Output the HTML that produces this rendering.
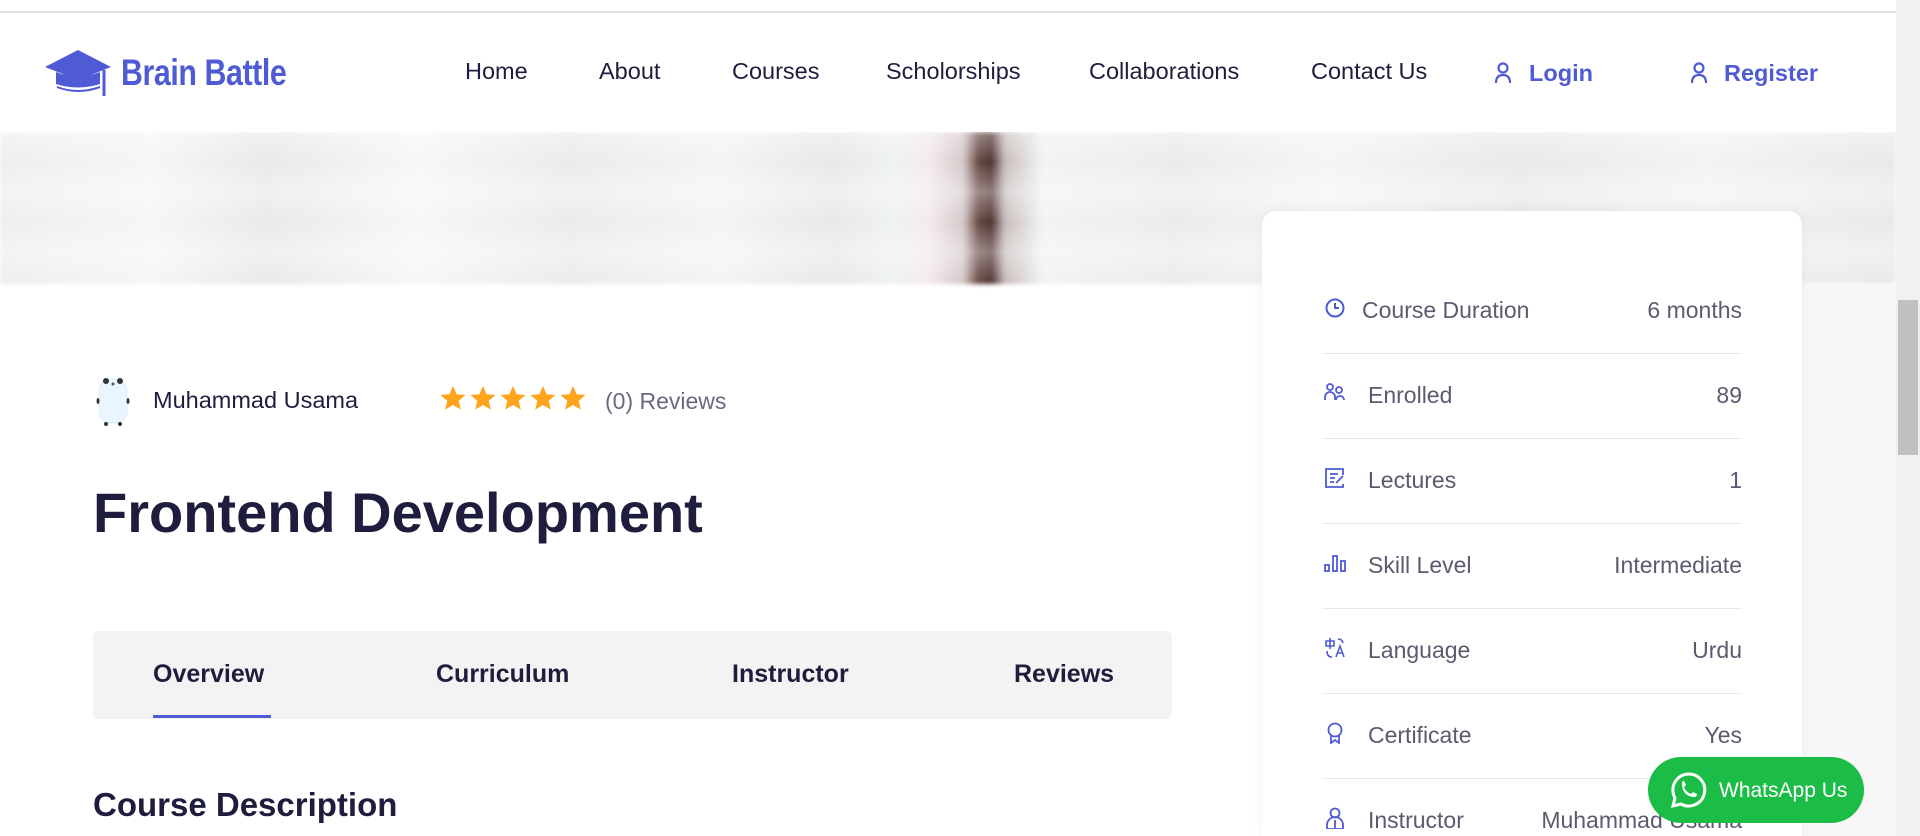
<!DOCTYPE html>
<html><head><meta charset="utf-8"><style>
*{margin:0;padding:0;box-sizing:border-box}
html,body{width:1920px;height:836px;overflow:hidden}
body{background:#fff;font-family:"Liberation Sans",sans-serif;position:relative;color:#1f1d3d}
.abs{position:absolute}
.topline{left:0;top:0;width:1920px;height:13px;background:#fff;border-bottom:2px solid #e2e2e2}
.header{left:0;top:13px;width:1896px;height:119px;background:#fff;z-index:3}
.nav{font-size:23.5px;color:#1f1d3d;top:58px;z-index:4}
.blue{color:#4f5bd5}
.hero{left:0;top:132px;width:1896px;height:152px;background:linear-gradient(90deg,#eee 0,#f6f6f6 8%,#e9e9e9 14%,#f7f7f7 22%,#ebebeb 30%,#f4f4f4 38%,#e8e8e8 44%,#eef2f0 47%,#f3eaee 49%,#d5c9c9 50.8%,#6a4a44 51.6%,#4e3632 52.3%,#c9bcbc 53%,#f1f4f2 55%,#ebebeb 62%,#f5f5f5 70%,#e9e9e9 80%,#f3f3f3 90%,#e9e9e9 100%);filter:blur(2px)}
.hero2{left:0;top:132px;width:1896px;height:152px;background:repeating-linear-gradient(180deg,rgba(255,255,255,.35) 0,rgba(255,255,255,0) 30px,rgba(255,255,255,.35) 60px)}
.side{left:1801px;top:284px;width:95px;height:552px;background:#f7f7f7}
.scroll{left:1896px;top:0;width:24px;height:836px;background:#f1f1f1}
.thumb{left:1898px;top:300px;width:20px;height:155px;background:#c1c1c1}
.card{left:1262px;top:211px;width:540px;height:625px;background:#fff;border-radius:14px 14px 0 0;box-shadow:0 0 14px rgba(0,0,0,.05)}
.row{left:1322px;width:420px;height:57px;border-bottom:1px solid #e8e8ee;font-size:23px;color:#5c5a6e}
.row .ic{position:absolute;left:2px;top:0;width:22px;height:22px}
.row .lb{position:absolute;left:46px;top:0}
.row .vl{position:absolute;right:0;top:0}
.tabs{left:93px;top:631px;width:1079px;height:88px;background:#f3f3f3;border-radius:6px}
.tab{font-size:25px;font-weight:bold;top:660px;color:#1f1d3d}
.wa{left:1648px;top:757px;width:216px;height:66px;background:#1bbd47;border-radius:33px;color:#fff;font-size:21px;z-index:5}
</style></head><body>
<div class="abs topline"></div>
<div class="abs header"></div>
<svg class="abs" style="left:44px;top:50px;z-index:4" width="76" height="52" viewBox="0 0 76 52"><path d="M34 0 L67 17 L34 30 L1 17Z" fill="#4f5bd5"/><path d="M12 22 Q34 31 56 22 L56 34 Q34 41 12 34Z" fill="#4f5bd5"/><path d="M13 37 Q34 45 56 37" stroke="#4f5bd5" stroke-width="2" fill="none"/><path d="M60 20 L60 46" stroke="#4f5bd5" stroke-width="3"/></svg>
<div class="abs blue" style="left:121px;top:52px;font-size:37px;z-index:4;transform:scaleX(.82);transform-origin:left;font-weight:bold;letter-spacing:-0.5px">Brain Battle</div>
<div class="abs nav" style="left:465px">Home</div>
<div class="abs nav" style="left:599px">About</div>
<div class="abs nav" style="left:732px">Courses</div>
<div class="abs nav" style="left:886px">Scholorships</div>
<div class="abs nav" style="left:1089px">Collaborations</div>
<div class="abs nav" style="left:1311px">Contact Us</div>
<svg class="abs" style="left:1494px;top:62px;z-index:4" width="18" height="22" viewBox="0 0 18 22" fill="none" stroke="#4f5bd5" stroke-width="2.2"><circle cx="9" cy="6" r="4.5"/><path d="M2 21 Q2 13 9 13 Q16 13 16 21"/></svg>
<div class="abs nav blue" style="left:1529px;top:60px;font-weight:bold">Login</div>
<svg class="abs" style="left:1690px;top:62px;z-index:4" width="18" height="22" viewBox="0 0 18 22" fill="none" stroke="#4f5bd5" stroke-width="2.2"><circle cx="9" cy="6" r="4.5"/><path d="M2 21 Q2 13 9 13 Q16 13 16 21"/></svg>
<div class="abs nav blue" style="left:1724px;top:60px;font-weight:bold">Register</div>
<div class="abs hero"></div><div class="abs hero2"></div>
<div class="abs side"></div>
<div class="abs scroll"></div><div class="abs thumb"></div>
<div class="abs card"></div>

<div class="abs row" style="top:297px"><svg class="ic" viewBox="0 0 22 22" fill="none" stroke="#4f5bd5" stroke-width="2"><circle cx="11" cy="11" r="8.5"/><path d="M11 6v5h4"/></svg><span class="lb" style="left:40px">Course Duration</span><span class="vl">6 months</span></div>
<div class="abs row" style="top:382px"><svg class="ic" viewBox="0 0 22 22" fill="none" stroke="#4f5bd5" stroke-width="1.8"><circle cx="6" cy="5" r="3"/><path d="M1 18v-3a5 5 0 0110 0v3"/><circle cx="15" cy="8" r="3"/><path d="M12 18a4 4 0 018 0"/></svg><span class="lb">Enrolled</span><span class="vl">89</span></div>
<div class="abs row" style="top:467px"><svg class="ic" viewBox="0 0 22 22" fill="none" stroke="#4f5bd5" stroke-width="1.8"><path d="M19 8V2H2v18h17v-3"/><path d="M6 7h8M6 11h5M6 15h4M12 16l7-7"/></svg><span class="lb">Lectures</span><span class="vl">1</span></div>
<div class="abs row" style="top:552px"><svg class="ic" viewBox="0 0 22 22" fill="none" stroke="#4f5bd5" stroke-width="1.8"><rect x="1" y="13" width="4" height="6"/><rect x="9" y="4" width="4" height="15"/><rect x="17" y="9" width="4" height="10"/></svg><span class="lb">Skill Level</span><span class="vl">Intermediate</span></div>
<div class="abs row" style="top:637px"><svg class="ic" viewBox="0 0 22 22" fill="none" stroke="#4f5bd5" stroke-width="1.6"><path d="M2 4h8v5H2zM6 1v11M3 14q0 6 5 6M12 20l4-11 4 11M13.5 16h5M14 2q4 0 5 4"/></svg><span class="lb">Language</span><span class="vl">Urdu</span></div>
<div class="abs row" style="top:722px"><svg class="ic" viewBox="0 0 22 22" fill="none" stroke="#4f5bd5" stroke-width="1.8"><circle cx="11" cy="8" r="6.5"/><path d="M7 13v8l4-3 4 3v-8"/></svg><span class="lb">Certificate</span><span class="vl">Yes</span></div>
<div class="abs row" style="top:807px;border:none"><svg class="ic" viewBox="0 0 22 22" fill="none" stroke="#4f5bd5" stroke-width="1.8"><circle cx="11" cy="6" r="4.5"/><path d="M3 22v-4a8 8 0 0116 0v4H3M11 13v9"/></svg><span class="lb">Instructor</span><span class="vl">Muhammad Usama</span></div>

<svg class="abs" style="left:93px;top:373px" width="40" height="54" viewBox="0 0 40 54"><rect x="6" y="6" width="28" height="44" rx="12" fill="#eaf6ff" stroke="#d8eefa"/><circle cx="13" cy="8" r="3" fill="#333"/><circle cx="27" cy="8" r="3" fill="#333"/><circle cx="20" cy="11" r="1.5" fill="#555"/><circle cx="13" cy="51" r="2" fill="#333"/><circle cx="27" cy="51" r="2" fill="#333"/><ellipse cx="5" cy="28" rx="1.5" ry="3" fill="#333"/><ellipse cx="35" cy="28" rx="1.5" ry="3" fill="#333"/></svg>
<div class="abs" style="left:153px;top:387px;font-size:23.5px;color:#1f1d3d">Muhammad Usama</div>
<svg class="abs" style="left:440px;top:385px" width="152" height="28" viewBox="0 0 152 28"><g fill="#ffa41b"><path id="s" d="M13 1l3.6 8.2 8.9.8-6.8 5.9 2.1 8.7L13 20l-7.8 4.6 2.1-8.7L.5 10l8.9-.8z"/><use href="#s" x="30"/><use href="#s" x="60"/><use href="#s" x="90"/><use href="#s" x="120"/></g></svg>
<div class="abs" style="left:605px;top:388px;font-size:23px;color:#6b6980">(0) Reviews</div>
<div class="abs" style="left:93px;top:480px;font-size:56px;font-weight:bold;color:#1f1d3d">Frontend Development</div>
<div class="abs tabs"></div>
<div class="abs tab blue" style="left:153px">Overview</div>
<div class="abs" style="left:153px;top:715px;width:118px;height:3px;background:#4f5bd5"></div>
<div class="abs tab" style="left:436px">Curriculum</div>
<div class="abs tab" style="left:732px">Instructor</div>
<div class="abs tab" style="left:1014px">Reviews</div>
<div class="abs" style="left:93px;top:786px;font-size:33px;font-weight:bold;color:#1f1d3d">Course Description</div>
<div class="abs wa"><svg style="position:absolute;left:22px;top:14px" width="38" height="38" viewBox="0 0 38 38" fill="none" stroke="#fff" stroke-width="3"><path d="M19 3a16 16 0 11-8 30L3 35l2-8A16 16 0 0119 3z"/><path d="M12 12q0-2 2-2l2 4-2 2q2 5 7 7l2-2 4 2q0 3-3 3Q12 25 12 12z" fill="#fff" stroke="none"/></svg><span style="position:absolute;left:71px;top:22px">WhatsApp Us</span></div>
</body></html>
